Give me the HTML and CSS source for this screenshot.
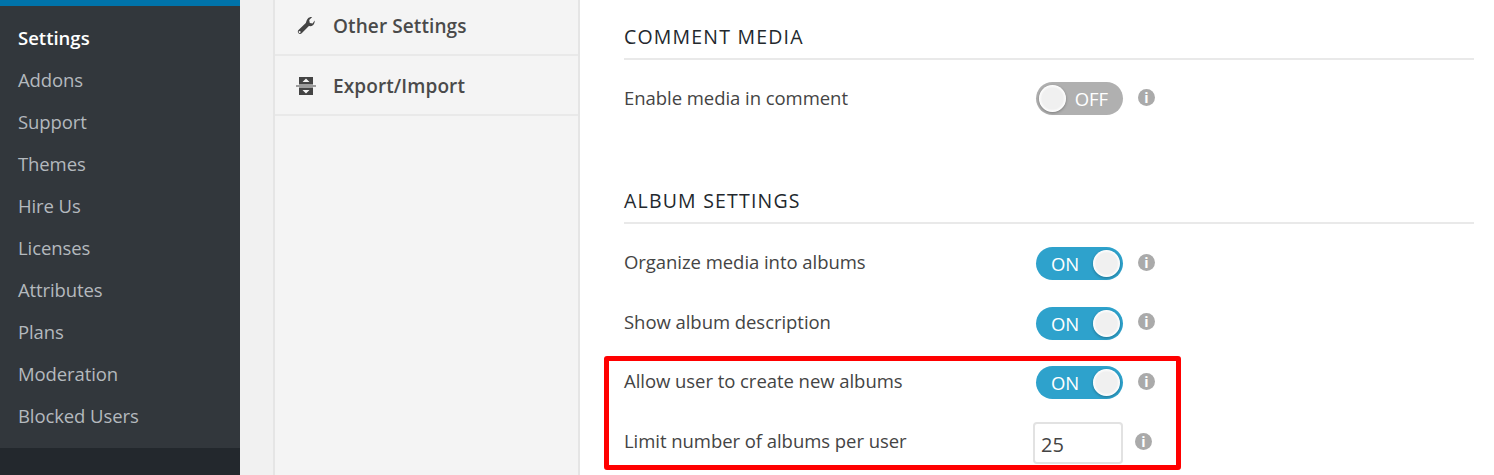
FILE: index.html
```html
<!DOCTYPE html>
<html lang="en">
<head>
    <meta charset="UTF-8">
    <title>Settings</title>
    <link rel="stylesheet" href="styles.css">
</head>
<body>
    <div class="page">
        <aside class="sidebar">
            <nav class="side-menu">
                <a href="#" class="active">Settings</a>
                <a href="#">Addons</a>
                <a href="#">Support</a>
                <a href="#">Themes</a>
                <a href="#">Hire Us</a>
                <a href="#">Licenses</a>
                <a href="#">Attributes</a>
                <a href="#">Plans</a>
                <a href="#">Moderation</a>
                <a href="#">Blocked Users</a>
            </nav>
        </aside>

        <div class="tabs">
            <a href="#" class="tab">
                <svg class="tab-icon" viewBox="0 0 20 20"><path d="M18.600 4.600c.3 1.600-.2 3.200-1.400 4.300-1.200 1.100-2.800 1.500-4.300 1.100l-7.200 7.300c-.9.9-2.300.9-3.200 0s-.9-2.300 0-3.200l7.300-7.200C10.400 5.300 10.800 3.700 11.900 2.500 13 1.300 14.600.8 16.200 1.100l-3 3 .6 2.800 2.800.6 2-2.900zM4.300 15.300a1 1 0 1 0 0 1.500 1 1 0 0 0 0-1.500z" fill-rule="evenodd"/></svg>
                Other Settings
            </a>
            <a href="#" class="tab">
                <svg class="tab-icon" viewBox="0 0 20 20"><path d="M3 1h14v7.500H3zM3 11.500h14V19H3z"/><path d="M0 9.500h20v1H0z"/><path d="M10 2.500l3.500 3.500h-7zM10 17.500L6.500 14h7z" fill="#f4f4f4"/></svg>
                Export/Import
            </a>
        </div>

        <main class="content">
            <h2 class="section-title first">Comment Media</h2>
            <div class="row">
                <span class="row-label">Enable media in comment</span>
                <span class="toggle off"><span class="knob"></span><span class="toggle-text">OFF</span></span>
                <span class="info">i</span>
            </div>

            <h2 class="section-title">Album Settings</h2>
            <div class="row row-low">
                <span class="row-label">Organize media into albums</span>
                <span class="toggle"><span class="toggle-text">ON</span><span class="knob"></span></span>
                <span class="info">i</span>
            </div>
            <div class="row row-low row-tight">
                <span class="row-label">Show album description</span>
                <span class="toggle"><span class="toggle-text">ON</span><span class="knob"></span></span>
                <span class="info">i</span>
            </div>
            <div class="row row-low">
                <span class="row-label">Allow user to create new albums</span>
                <span class="toggle"><span class="toggle-text">ON</span><span class="knob"></span></span>
                <span class="info">i</span>
            </div>
            <div class="row row-low">
                <span class="row-label">Limit number of albums per user</span>
                <input type="text" class="number-input" value="25">
                <span class="info info-input">i</span>
            </div>

            <div class="red-box"></div>
        </main>
    </div>
</body>
</html>
```
FILE: styles.css
```css
/* Base styles */
html, body {
    margin: 0;
    padding: 0;
    height: 475px;
    overflow: hidden;
}
body {
    font-family: "Open Sans", "Noto Sans", sans-serif;
    background-color: #f1f1f1;
    color: #444;
}
.page {
    display: flex;
    height: 475px;
}

/* Admin sidebar */
.sidebar {
    width: 240px;
    flex-shrink: 0;
    background-color: #23282d;
    border-top: 6px solid #0073aa;
    box-sizing: border-box;
}
.side-menu {
    background-color: #32373c;
    padding: 11px 0 11px;
}
.side-menu a {
    display: block;
    height: 42px;
    line-height: 42px;
    padding-left: 18px;
    font-size: 18.5px;
    letter-spacing: -0.1px;
    color: #b4b9be;
    text-decoration: none;
}
.side-menu a.active {
    color: #fff;
    font-weight: 600;
    letter-spacing: 0;
}

/* Settings tabs */
.tabs {
    width: 307px;
    margin-left: 33px;
    flex-shrink: 0;
    box-sizing: border-box;
    background-color: #f4f4f4;
    border-left: 2px solid #e5e5e5;
    border-right: 2px solid #e5e5e5;
}
.tab {
    display: flex;
    align-items: center;
    height: 60px;
    margin-top: -4px;
    margin-bottom: 4px;
    box-sizing: border-box;
    padding: 2px 0 0 21px;
    border-bottom: 2px solid #e9e9e9;
    font-size: 19px;
    font-weight: 600;
    letter-spacing: 0.1px;
    color: #4a4a4a;
    text-decoration: none;
}
.tab-icon {
    width: 20px;
    height: 20px;
    margin-right: 17px;
    fill: #444;
}

/* Settings content */
.content {
    position: relative;
    flex: 1;
    background-color: #fff;
    padding: 0 20px 0 44px;
}
.section-title {
    margin: 52px 0 0;
    height: 44px;
    line-height: 42px;
    box-sizing: border-box;
    border-bottom: 2px solid #e9e9e9;
    font-size: 19.5px;
    font-weight: 500;
    letter-spacing: 1.2px;
    text-transform: uppercase;
    color: #23282d;
}
.section-title.first {
    margin-top: 16px;
}
.row {
    display: flex;
    align-items: center;
    height: 60px;
    font-size: 18.5px;
    letter-spacing: -0.05px;
}
.row-tight {
    height: 59px;
}
.section-title + .row {
    margin-top: 8px;
}
.row-label {
    width: 412px;
    flex-shrink: 0;
    padding-bottom: 1px;
}
.toggle {
    display: flex;
    align-items: center;
    justify-content: space-between;
    width: 87px;
    height: 33px;
    box-sizing: border-box;
    padding: 0 3px 0 15px;
    border-radius: 17px;
    background-color: #2ea2cc;
    color: #fff;
    font-size: 18.5px;
}
.toggle.off {
    background-color: #b0b0b0;
    padding: 0 15px 0 3px;
}
.knob {
    width: 27px;
    height: 27px;
    border-radius: 50%;
    background: radial-gradient(circle, #f0f0f0 55%, #fff 70%);
    box-shadow: 0 1px 3px rgba(0,0,0,0.3);
}
.info {
    width: 17px;
    height: 17px;
    margin: -2px 0 0 15px;
    border-radius: 50%;
    background-color: #aaa;
    color: #fff;
    font-size: 14px;
    font-weight: 700;
    line-height: 17px;
    text-align: center;
    letter-spacing: 0;
}
.row-low .toggle {
    margin-top: 3px;
}
.row-low .info {
    margin-top: 0;
}
.number-input {
    width: 90px;
    height: 42px;
    margin: 4px 0 0 -3px;
    box-sizing: border-box;
    padding: 2px 0 0 6px;
    border: 2px solid #e2e2e2;
    border-radius: 4px;
    font-family: inherit;
    font-size: 20px;
    color: #444;
    outline: none;
}
.row-low .info-input {
    margin-left: 12px;
}

/* Red annotation over the last two rows */
.red-box {
    position: absolute;
    left: 24px;
    top: 356px;
    width: 577px;
    height: 114px;
    box-sizing: border-box;
    border: 5px solid #f00;
    border-radius: 3px;
}
```
